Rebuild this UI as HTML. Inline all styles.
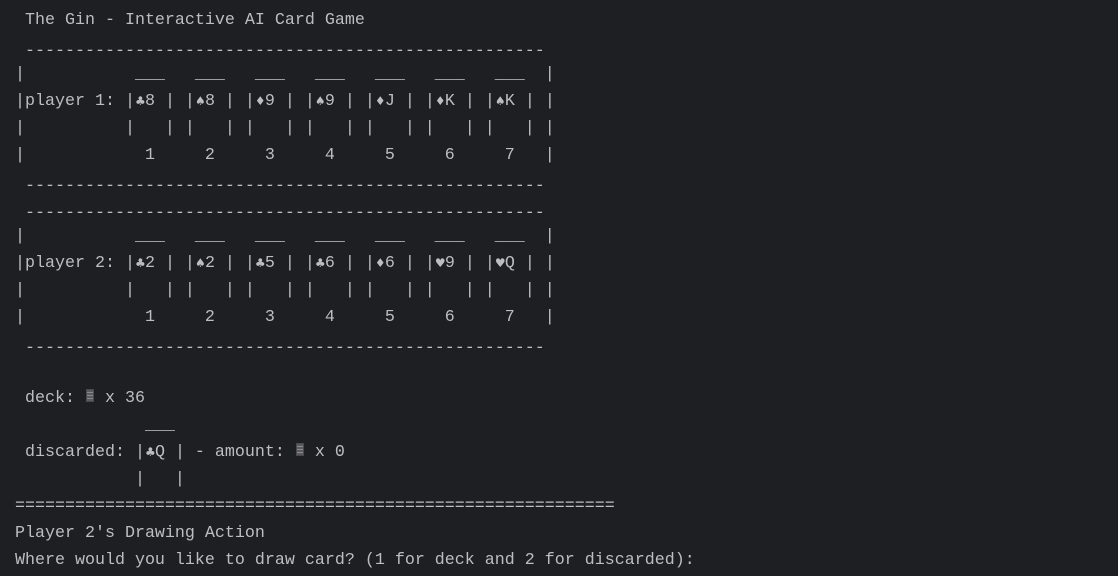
<!DOCTYPE html>
<html><head><meta charset="utf-8"><style>
html,body{margin:0;padding:0;background:#1e1f22;width:1118px;height:576px;overflow:hidden}
#t{position:absolute;left:15px;top:7px;font-family:"Liberation Mono","DejaVu Sans Mono",monospace;font-size:16.66px;color:#bcbec4}
#t div{height:27px;line-height:27px;white-space:pre;overflow:visible}
.s{display:inline-block;width:10px;height:10px;line-height:10px;text-align:center;font-family:"DejaVu Sans",sans-serif;font-size:12px;vertical-align:0}
.d{display:inline-block;width:10px;height:10px;vertical-align:0;position:relative}
.d:after{content:"";position:absolute;left:1px;top:-3px;width:8px;height:13px;box-sizing:border-box;border:1px solid #4a4a4e;background:repeating-linear-gradient(#5a5a5e 0 2px,#8a8a90 2px 3px)}
.m{position:relative;top:4px}
</style></head><body><div id="t">
<div> The Gin - Interactive AI Card Game</div>
<div><span class="m"> ----------------------------------------------------</span></div>
<div>|           ___   ___   ___   ___   ___   ___   ___  |</div>
<div>|player 1: |<span class="s">♣</span>8 | |<span class="s">♠</span>8 | |<span class="s">♦</span>9 | |<span class="s">♠</span>9 | |<span class="s">♦</span>J | |<span class="s">♦</span>K | |<span class="s">♠</span>K | |</div>
<div>|          |   | |   | |   | |   | |   | |   | |   | |</div>
<div>|            1     2     3     4     5     6     7   |</div>
<div><span class="m"> ----------------------------------------------------</span></div>
<div><span class="m"> ----------------------------------------------------</span></div>
<div>|           ___   ___   ___   ___   ___   ___   ___  |</div>
<div>|player 2: |<span class="s">♣</span>2 | |<span class="s">♠</span>2 | |<span class="s">♣</span>5 | |<span class="s">♣</span>6 | |<span class="s">♦</span>6 | |<span class="s">♥</span>9 | |<span class="s">♥</span>Q | |</div>
<div>|          |   | |   | |   | |   | |   | |   | |   | |</div>
<div>|            1     2     3     4     5     6     7   |</div>
<div><span class="m"> ----------------------------------------------------</span></div>
<div></div>
<div> deck: <span class="d"></span> x 36</div>
<div>             ___</div>
<div> discarded: |<span class="s">♣</span>Q | - amount: <span class="d"></span> x 0</div>
<div>            |   |</div>
<div>============================================================</div>
<div>Player 2's Drawing Action</div>
<div>Where would you like to draw card? (1 for deck and 2 for discarded):</div>
</div></body></html>
